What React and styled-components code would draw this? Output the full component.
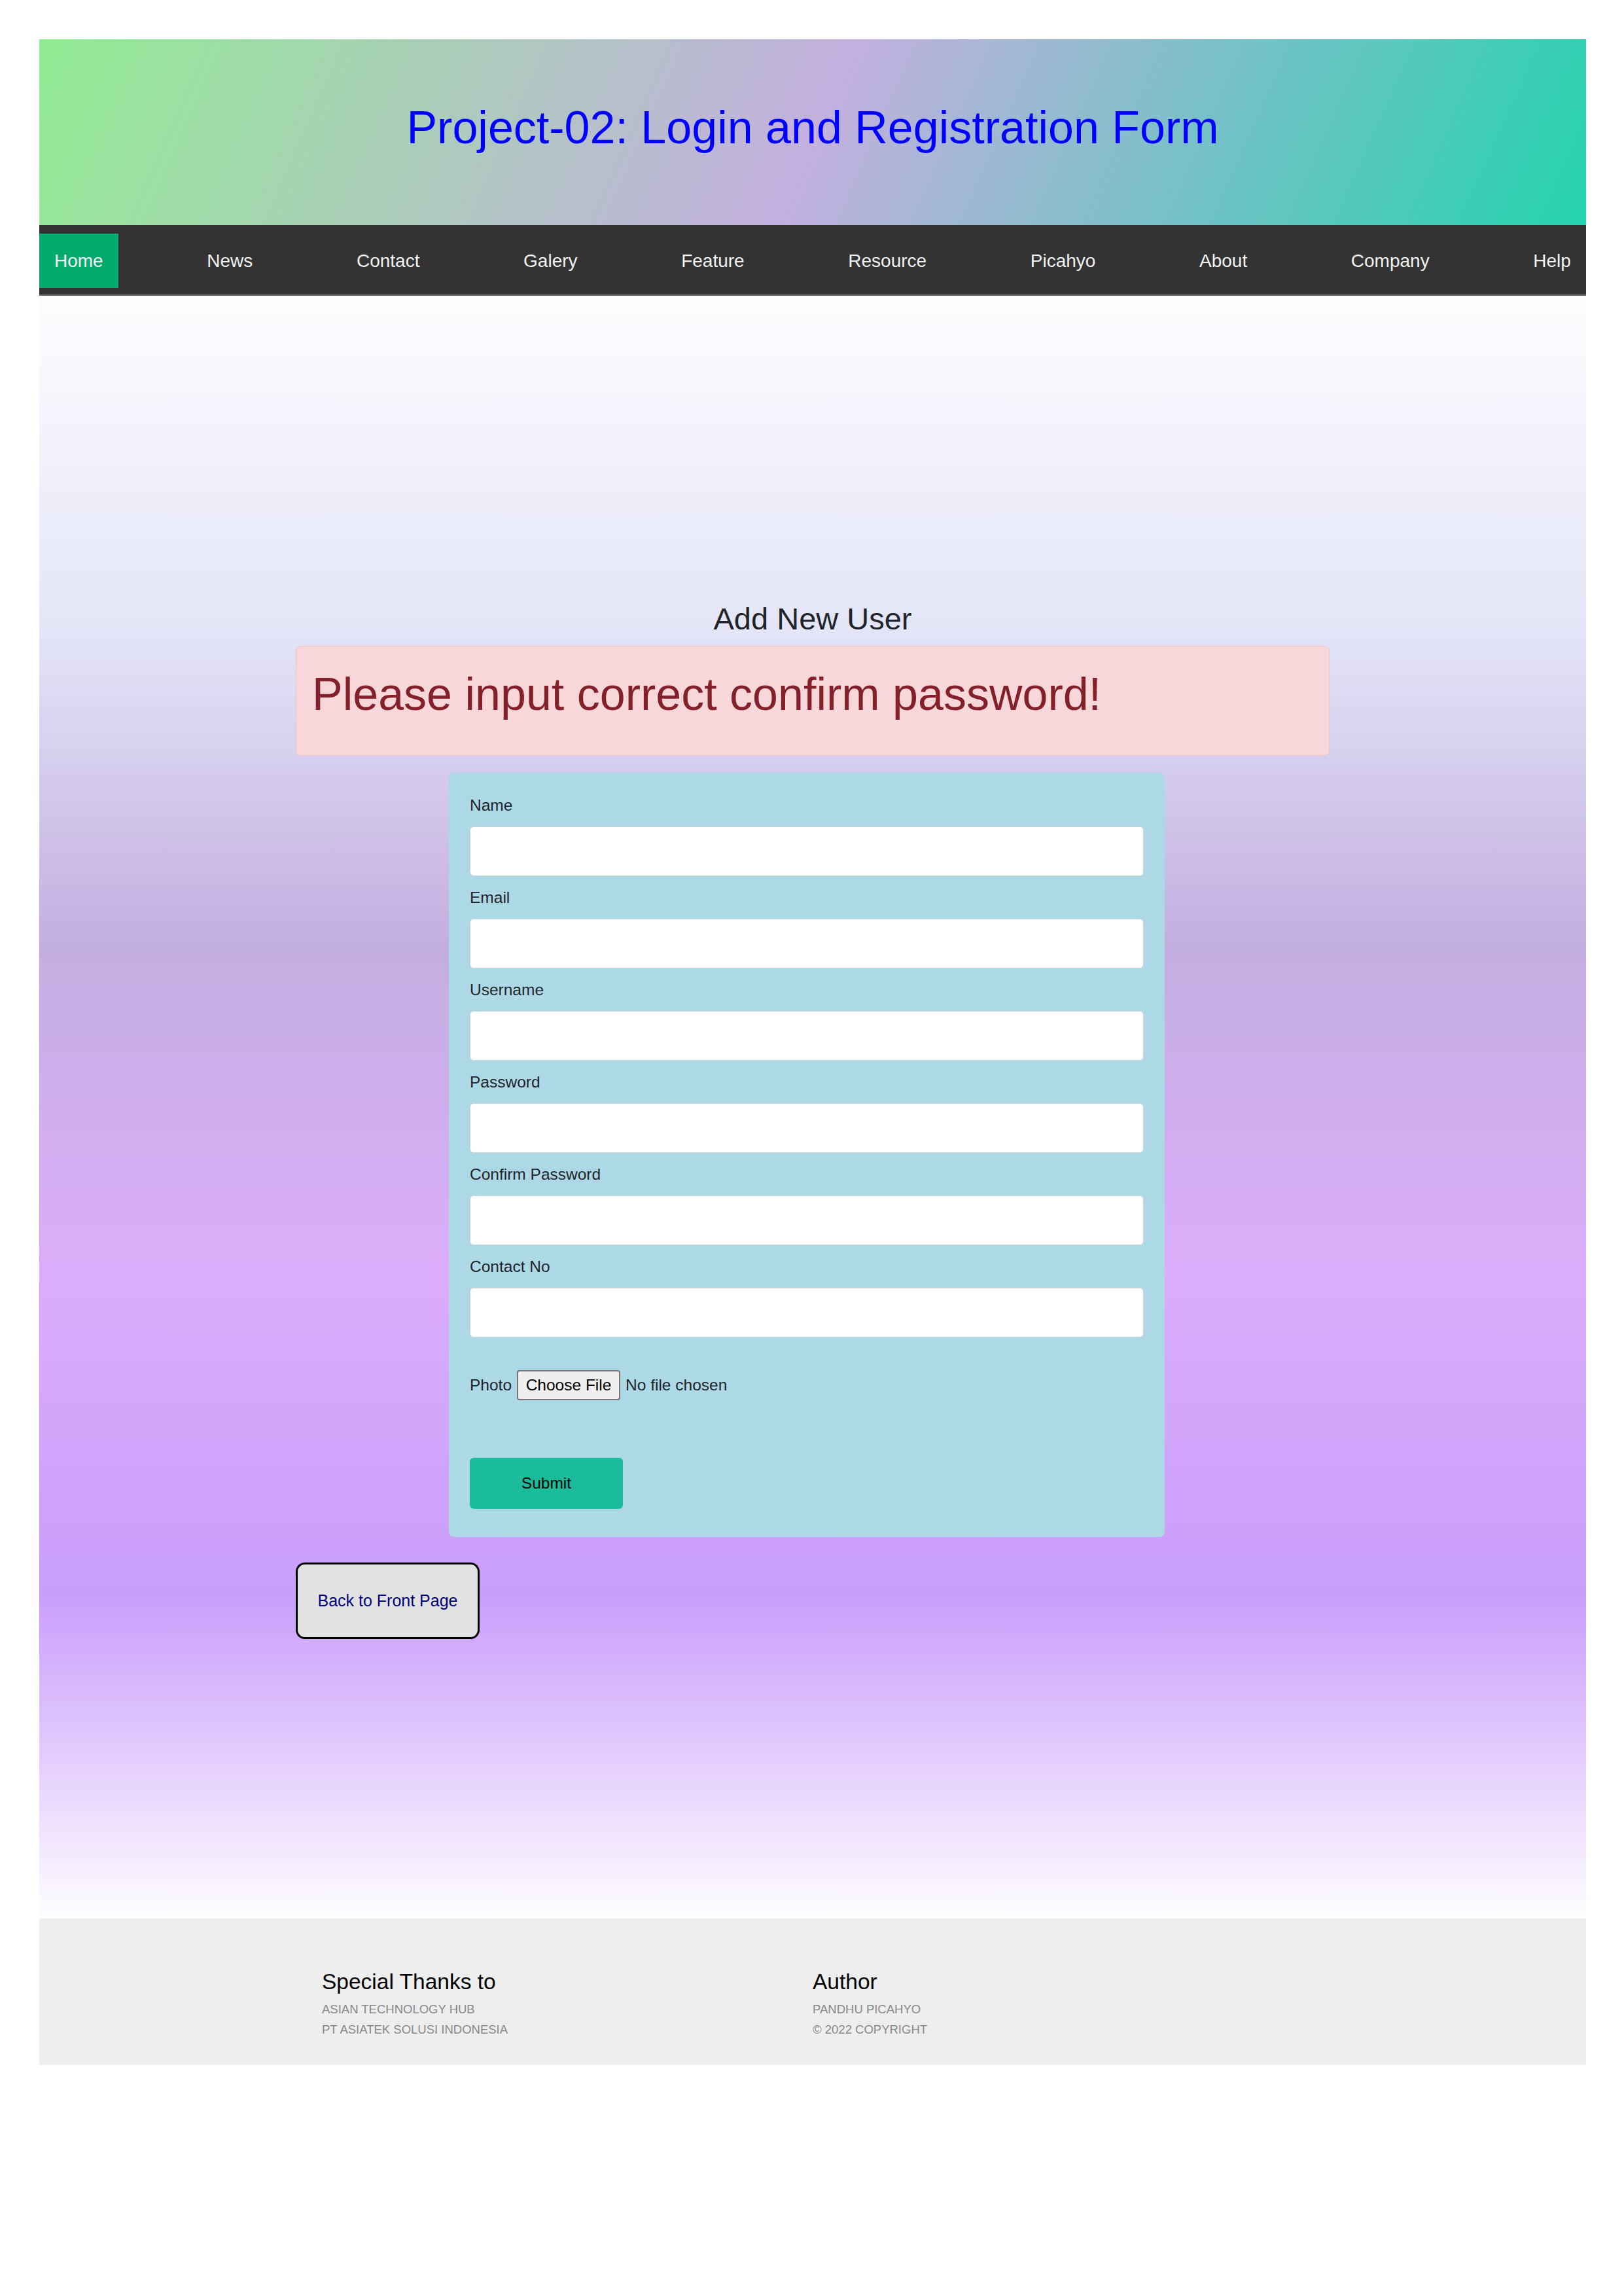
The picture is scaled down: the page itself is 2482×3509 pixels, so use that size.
import React from "react";
import styled, { createGlobalStyle } from "styled-components";

const GlobalStyle = createGlobalStyle`
  html, body {
    margin: 0;
    padding: 0;
    background: #ffffff;
  }
  body {
    font-family: "Liberation Sans", Arial, Helvetica, sans-serif;
    color: #212529;
  }
  * { box-sizing: border-box; }
`;

const Page = styled.div`
  padding: 60px 58px 354px 60px;
`;

const Header = styled.header`
  height: 284px;
  padding-bottom: 14px;
  display: flex;
  align-items: center;
  justify-content: center;
  background: linear-gradient(114deg, #92ec93 0%, #c3b0df 50%, #24d3ad 100%);
`;

const Title = styled.h1`
  margin: 0;
  font-size: 70px;
  font-weight: normal;
  line-height: 1.2;
  color: #0000ff;
`;

const Nav = styled.nav`
  display: flex;
  justify-content: space-between;
  align-items: center;
  background: #333333;
  padding: 13px 0 10px;
  border-bottom: 2px solid #666666;
`;

const NavLink = styled.a`
  display: flex;
  align-items: center;
  height: 83px;
  padding: 0 23px;
  font-size: 28px;
  color: #f2f2f2;
  text-decoration: none;
  background: ${(p) => (p.$active ? "#04aa6d" : "transparent")};
`;

const Main = styled.main`
  padding: 466px 0 427px;
  background: linear-gradient(
    to bottom,
    #fdfdff 0%,
    #e3e4f7 21%,
    #c3aee0 40%,
    #dcadfa 60%,
    #c99dfc 80%,
    #fefdff 100%
  );
`;

const Container = styled.div`
  width: 1580px;
  margin: 0 auto;
`;

const Heading = styled.h3`
  margin: 0;
  text-align: center;
  font-size: 47px;
  font-weight: normal;
  line-height: 1.2;
  color: #212529;
`;

const Alert = styled.div`
  margin-top: 13px;
  height: 168px;
  padding: 31px 24px 0;
  background: #f8d7da;
  border: 1px solid #f5c2c7;
  border-radius: 8px;
`;

const AlertText = styled.h1`
  margin: 0;
  font-size: 70px;
  font-weight: normal;
  line-height: 1.2;
  color: #842029;
`;

const Card = styled.form`
  margin: 26px 0 0 234px;
  width: 1094px;
  padding: 32px 32px 43px;
  background: #add8e6;
  border-radius: 8px;
  display: flex;
  flex-direction: column;
`;

const Field = styled.div`
  display: flex;
  flex-direction: column;
  margin-bottom: 15px;
`;

const Label = styled.label`
  font-size: 24.5px;
  line-height: 36px;
  margin-bottom: 14px;
  color: #212529;
`;

const Input = styled.input`
  height: 76px;
  width: 100%;
  background: #ffffff;
  border: 1px solid #ced4da;
  border-radius: 6px;
  font-size: 24px;
  padding: 0 18px;
`;

const PhotoRow = styled.div`
  margin-top: 35px;
  height: 46px;
  display: flex;
  align-items: center;
  font-size: 24.5px;
  color: #212529;
`;

const PhotoLabel = styled.span`
  margin-right: 8px;
`;

const FileButton = styled.span`
  display: flex;
  align-items: center;
  justify-content: center;
  width: 158px;
  height: 46px;
  background: #efefef;
  border: 2px solid #767676;
  border-radius: 4px;
  color: #000000;
  font-size: 24.5px;
  margin-right: 8px;
`;

const FileStatus = styled.span`
  color: #212529;
`;

const Submit = styled.button`
  margin-top: 88px;
  width: 234px;
  height: 78px;
  border: none;
  border-radius: 6px;
  background: #1abc9c;
  color: #000000;
  font-family: inherit;
  font-size: 24.5px;
`;

const BackButton = styled.a`
  margin-top: 39px;
  display: flex;
  align-items: center;
  justify-content: center;
  width: 281px;
  height: 117px;
  border: 3px solid #000000;
  border-radius: 14px;
  background: #e3e2e2;
  color: #000080;
  font-size: 25px;
  text-decoration: none;
`;

const Footer = styled.footer`
  background: #eeeeee;
  padding: 77px 0 39px;
`;

const FooterInner = styled.div`
  width: 1500px;
  margin: 0 auto;
  display: grid;
  grid-template-columns: 1fr 1fr;
`;

const FooterCol = styled.div`
  display: flex;
  flex-direction: column;
`;

const FooterTitle = styled.h4`
  margin: 0 0 5px;
  font-size: 33.5px;
  font-weight: normal;
  line-height: 1.2;
  color: #000000;
`;

const FooterLine = styled.span`
  font-size: 18.5px;
  line-height: 31px;
  color: #888888;
  text-transform: uppercase;
`;

const navItems = [
  "Home",
  "News",
  "Contact",
  "Galery",
  "Feature",
  "Resource",
  "Picahyo",
  "About",
  "Company",
  "Help",
];

const fields = [
  { label: "Name", type: "text" },
  { label: "Email", type: "email" },
  { label: "Username", type: "text" },
  { label: "Password", type: "password" },
  { label: "Confirm Password", type: "password" },
  { label: "Contact No", type: "text" },
];

export default function App() {
  return (
    <>
      <GlobalStyle />
      <Page>
        <Header>
          <Title>Project-02: Login and Registration Form</Title>
        </Header>
        <Nav>
          {navItems.map((item, i) => (
            <NavLink key={item} href="#" $active={i === 0}>
              {item}
            </NavLink>
          ))}
        </Nav>
        <Main>
          <Container>
            <Heading>Add New User</Heading>
            <Alert>
              <AlertText>Please input correct confirm password!</AlertText>
            </Alert>
            <Card onSubmit={(e) => e.preventDefault()}>
              {fields.map((f) => (
                <Field key={f.label}>
                  <Label>{f.label}</Label>
                  <Input type={f.type} />
                </Field>
              ))}
              <PhotoRow>
                <PhotoLabel>Photo</PhotoLabel>
                <FileButton>Choose File</FileButton>
                <FileStatus>No file chosen</FileStatus>
              </PhotoRow>
              <Submit type="submit">Submit</Submit>
            </Card>
            <BackButton href="#">Back to Front Page</BackButton>
          </Container>
        </Main>
        <Footer>
          <FooterInner>
            <FooterCol>
              <FooterTitle>Special Thanks to</FooterTitle>
              <FooterLine>Asian Technology Hub</FooterLine>
              <FooterLine>PT Asiatek Solusi Indonesia</FooterLine>
            </FooterCol>
            <FooterCol>
              <FooterTitle>Author</FooterTitle>
              <FooterLine>Pandhu Picahyo</FooterLine>
              <FooterLine>© 2022 Copyright</FooterLine>
            </FooterCol>
          </FooterInner>
        </Footer>
      </Page>
    </>
  );
}
